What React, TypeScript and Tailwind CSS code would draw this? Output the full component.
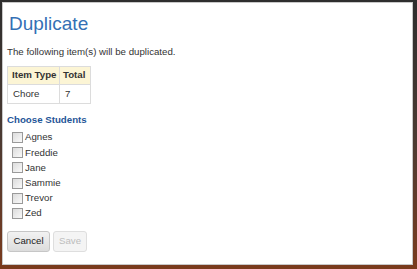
import { useState } from 'react';

const students = ['Agnes', 'Freddie', 'Jane', 'Sammie', 'Trevor', 'Zed'];

export default function App() {
  const [checked, setChecked] = useState<string[]>([]);

  function toggle(name: string) {
    setChecked(prev => (prev.includes(name) ? prev.filter(n => n !== name) : [...prev, name]));
  }

  return (
    <div className="w-[417px] h-[269px] bg-linear-to-b from-[#2e2e2e] via-[#4a3a32] to-[#7a3a1c] pl-[2px] pt-[2px] pr-[4px] pb-[4px] font-['Liberation_Sans',Arial,sans-serif] text-[#333]">
      <div className="h-full bg-white border border-[#c8c8c8] pl-[4px] pt-[9px]">
        <h1 className="text-[19px] leading-[24px] text-[#3470b5] pl-[2px]">Duplicate</h1>

        <p className="text-[9.7px] leading-[12px] mt-[10px]">The following item(s) will be duplicated.</p>

        <table className="mt-[8px] border-collapse text-[9.7px] table-fixed w-[83px]">
          <thead>
            <tr className="bg-[#fcf5d5]">
              <th className="border border-[#dcdcdc] h-[18px] pl-[4px] pr-0 text-left font-bold whitespace-nowrap w-[52px]">Item Type</th>
              <th className="border border-[#dcdcdc] h-[18px] pl-[3px] pr-0 text-left font-bold whitespace-nowrap w-[31px]">Total</th>
            </tr>
          </thead>
          <tbody>
            <tr>
              <td className="border border-[#dcdcdc] h-[19px] px-[5px]">Chore</td>
              <td className="border border-[#dcdcdc] h-[19px] px-[5px]">7</td>
            </tr>
          </tbody>
        </table>

        <h2 className="mt-[10px] text-[9.7px] leading-[12px] font-bold text-[#1f5597]">Choose Students</h2>

        <div className="mt-[4px] pl-[5px]">
          {students.map(name => (
            <label key={name} className="flex items-center h-[15.2px] text-[9.7px] cursor-pointer">
              <input
                type="checkbox"
                checked={checked.includes(name)}
                onChange={() => toggle(name)}
                className="appearance-none w-[11px] h-[11px] border border-[#9a9a9a] bg-linear-to-br from-[#dcdcdc] to-[#fafafa] mr-[2px] checked:bg-[#3470b5]"
              />
              <span>{name}</span>
            </label>
          ))}
        </div>

        <div className="flex gap-[3px] mt-[10px]">
          <button className="h-[21px] w-[43px] rounded-[3px] border border-[#c6c6c6] bg-linear-to-b from-[#f2f2f2] to-[#dcdcdc] text-[9.7px] text-[#222]">
            Cancel
          </button>
          <button disabled className="h-[21px] w-[34px] rounded-[3px] border border-[#dedede] bg-[#f4f4f4] text-[9.7px] text-[#bdbdbd]">
            Save
          </button>
        </div>
      </div>
    </div>
  );
}
